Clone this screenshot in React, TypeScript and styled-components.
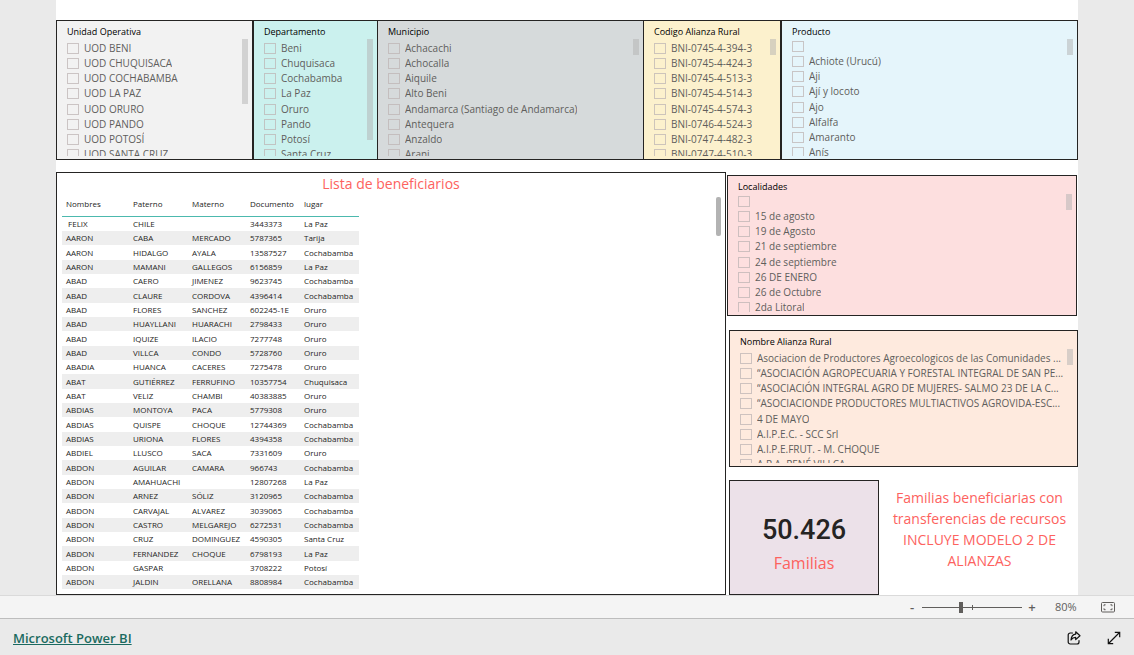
import React from "react";
import styled, { createGlobalStyle, css } from "styled-components";

const GlobalStyle = createGlobalStyle`
  *, *::before, *::after { box-sizing: border-box; }
  body {
    margin: 0;
    background: #eaeaea;
    font-family: "Open Sans", "Noto Sans", sans-serif;
    color: #252423;
  }
`;

const Page = styled.div`
  display: flex;
  flex-direction: column;
  min-height: 100vh;
`;

const Stage = styled.main`
  padding: 0 56px;
  background: #eaeaea;
`;

const Canvas = styled.div`
  background: #fff;
  padding-top: 20px;
`;

const FilterRow = styled.div`
  display: grid;
  grid-template-columns: 197fr 125fr 266fr 137fr 297fr;
  margin-bottom: 12px;
`;

const Body = styled.div`
  display: grid;
  grid-template-columns: 670fr 352fr;
`;

const SideColumn = styled.div`
  display: flex;
  flex-direction: column;
  min-width: 0;
  padding-top: 3px;
`;

const SlicerBox = styled.fieldset<{ $tone: string; $joined?: boolean }>`
  position: relative;
  min-width: 0;
  margin: 0;
  padding: 4px 4px 3px 10px;
  border: 1px solid #252423;
  ${(p) => p.$joined && css`border-left: 0;`}
  background: ${(p) => p.$tone};
`;

const SlicerTitle = styled.div`
  font-size: 9px;
  line-height: 14px;
  color: #000;
`;

const SlicerList = styled.ul<{ $height: number }>`
  list-style: none;
  margin: 0;
  padding: 2px 0 0;
  height: ${(p) => p.$height}px;
  overflow: hidden;
`;

const SlicerItem = styled.li<{ $blank: boolean }>`
  height: ${(p) => (p.$blank ? 13 : 15)}px;
  &:nth-child(4) { height: 16px; }
`;

const SlicerLabel = styled.label<{ $blank: boolean }>`
  display: flex;
  align-items: ${(p) => (p.$blank ? "flex-start" : "center")};
  gap: 5px;
  height: ${(p) => (p.$blank ? 13 : 15)}px;
  font-size: 10px;
  line-height: 15px;
  color: #605e5c;
`;

const LabelText = styled.span`
  min-width: 0;
  overflow: hidden;
  text-overflow: ellipsis;
  white-space: nowrap;
`;

const Tick = styled.input`
  appearance: none;
  flex: none;
  width: 12px;
  height: 11px;
  margin: 0;
  border: 1px solid rgba(190, 180, 180, 0.75);
  background: transparent;
  &:checked { background: #605e5c; }
`;

const Thumb = styled.div<{ $length: number }>`
  position: absolute;
  top: 18px;
  right: 4px;
  width: 6px;
  height: ${(p) => p.$length}px;
  background: rgba(178, 178, 178, 0.5);
`;

const LocalitiesSlot = styled.div`
  margin: 0 1px 14px 1px;
`;

const LowerSlot = styled.div`
  margin: 0 0 13px 3px;
`;

const TablePanel = styled.section`
  position: relative;
  border: 1px solid #252423;
  padding: 2px 5px 5px;
`;

const TableTitle = styled.h1`
  margin: 0;
  font-size: 14px;
  line-height: 18px;
  font-weight: 400;
  text-align: center;
  color: #fd625e;
`;

const Table = styled.table`
  width: 297px;
  table-layout: fixed;
  border-collapse: separate;
  border-spacing: 0;
  font-size: 8px;
  line-height: 14px;
`;

const HeadCell = styled.th`
  height: 24px;
  padding: 0 0 2px 4px;
  border-bottom: 1px solid #4cb9ae;
  font-weight: 400;
  text-align: left;
  vertical-align: middle;
`;

const Row = styled.tr`
  &:nth-child(even) { background: #eeeeee; }
  &:nth-child(3n) td { height: 15px; }
`;

const Cell = styled.td`
  height: 14px;
  padding: 0 0 0 4px;
  white-space: pre;
`;

const TableThumb = styled.div`
  position: absolute;
  top: 24px;
  right: 4px;
  width: 5px;
  height: 39px;
  border-radius: 2px;
  background: #b3b3b3;
`;

const Summary = styled.div`
  display: grid;
  grid-template-columns: 150fr 199fr;
  flex: 1;
  margin-left: 3px;
`;

const Card = styled.section`
  display: flex;
  flex-direction: column;
  align-items: center;
  justify-content: center;
  padding-top: 16px;
  border: 1px solid #252423;
  background: #ece1e9;
`;

const CardValue = styled.strong`
  font-family: Roboto, sans-serif;
  font-size: 27px;
  line-height: 34px;
  font-weight: 500;
  color: #252423;
`;

const CardLabel = styled.span`
  font-size: 16px;
  line-height: 32px;
  font-weight: 400;
  color: #fd625e;
`;

const Note = styled.p`
  margin: 0;
  padding: 7px 8px 0 10px;
  font-size: 14px;
  line-height: 21px;
  font-weight: 400;
  text-align: center;
  color: #fd625e;
`;

const ZoomBar = styled.div`
  display: flex;
  align-items: center;
  justify-content: flex-end;
  height: 24px;
  padding-right: 18px;
  border-top: 1px solid #dadada;
  border-bottom: 1px solid #bdbdbd;
  background: #f4f4f4;
  color: #605e5c;
`;

const StepButton = styled.button`
  width: 20px;
  height: 20px;
  padding: 0;
  border: 0;
  background: transparent;
  font: 600 13px/20px "Open Sans", sans-serif;
  color: #605e5c;
`;

const ZoomRange = styled.input`
  appearance: none;
  width: 100px;
  height: 12px;
  margin: 0;
  background:
    linear-gradient(#605e5c, #605e5c) 50% 50% / 1px 5px no-repeat,
    linear-gradient(#605e5c, #605e5c) 0 50% / 100% 1px no-repeat;
  &::-webkit-slider-thumb {
    appearance: none;
    width: 4px;
    height: 11px;
    background: #605e5c;
  }
`;

const ZoomValue = styled.span`
  width: 58px;
  padding-left: 13px;
  font-size: 11px;
  line-height: 20px;
`;

const IconButton = styled.button`
  display: flex;
  align-items: center;
  justify-content: center;
  width: 16px;
  height: 16px;
  padding: 0;
  border: 0;
  background: transparent;
  color: inherit;
`;

const Footer = styled.footer`
  display: flex;
  align-items: center;
  justify-content: space-between;
  flex: 1;
  min-height: 36px;
  padding: 2px 12px 0 13px;
  background: #eaeaea;
`;

const BrandLink = styled.a`
  font-size: 13px;
  line-height: 20px;
  font-weight: 600;
  color: #1b6a60;
`;

const FooterActions = styled.div`
  display: flex;
  gap: 24px;
  color: #111;
`;

type SlicerProps = {
  title: string;
  items: string[];
  tone: string;
  thumb: number;
  height?: number;
  joined?: boolean;
};

function Slicer({ title, items, tone, thumb, height = 117, joined }: SlicerProps) {
  return (
    <SlicerBox $tone={tone} $joined={joined} aria-label={title}>
      <SlicerTitle>{title}</SlicerTitle>
      <SlicerList $height={height}>
        {items.map((item) => (
          <SlicerItem key={item} $blank={item === ""}>
            <SlicerLabel $blank={item === ""}>
              <Tick type="checkbox" aria-label={item || "En blanco"} />
              <LabelText>{item}</LabelText>
            </SlicerLabel>
          </SlicerItem>
        ))}
      </SlicerList>
      <Thumb $length={thumb} />
    </SlicerBox>
  );
}

const filters: SlicerProps[] = [
  {
    title: "Unidad Operativa", tone: "#f2f2f2", thumb: 65,
    items: ["UOD BENI", "UOD CHUQUISACA", "UOD COCHABAMBA", "UOD LA PAZ", "UOD ORURO", "UOD PANDO", "UOD POTOSÍ", "UOD SANTA CRUZ"],
  },
  {
    title: "Departamento", tone: "#cbf1ee", thumb: 101,
    items: ["Beni", "Chuquisaca", "Cochabamba", "La Paz", "Oruro", "Pando", "Potosí", "Santa Cruz"],
  },
  {
    title: "Municipio", tone: "#d6dadb", thumb: 16, joined: true,
    items: ["Achacachi", "Achocalla", "Aiquile", "Alto Beni", "Andamarca (Santiago de Andamarca)", "Antequera", "Anzaldo", "Arani"],
  },
  {
    title: "Codigo Alianza Rural", tone: "#fcf1cd", thumb: 16, joined: true,
    items: ["BNI-0745-4-394-3", "BNI-0745-4-424-3", "BNI-0745-4-513-3", "BNI-0745-4-514-3", "BNI-0745-4-574-3", "BNI-0746-4-524-3", "BNI-0747-4-482-3", "BNI-0747-4-510-3"],
  },
  {
    title: "Producto", tone: "#e5f5fb", thumb: 16,
    items: ["", "Achiote (Urucú)", "Aji", "Ají y locoto", "Ajo", "Alfalfa", "Amaranto", "Anís"],
  },
];

const localities = ["", "15 de agosto", "19 de Agosto", "21 de septiembre", "24 de septiembre", "26 DE ENERO", "26 de Octubre", "2da Litoral"];

const alliances = [
  "Asociacion de Productores Agroecologicos de las Comunidades ...",
  "“ASOCIACIÓN AGROPECUARIA Y FORESTAL INTEGRAL DE SAN PE...",
  "“ASOCIACIÓN INTEGRAL AGRO DE MUJERES- SALMO 23 DE LA C...",
  "“ASOCIACIONDE PRODUCTORES MULTIACTIVOS AGROVIDA-ESC...",
  "4 DE MAYO",
  "A.I.P.E.C. - SCC Srl",
  "A.I.P.E.FRUT. - M. CHOQUE",
  "A.P.A. RENÉ VILLCA",
];

const columns: [string, number][] = [
  ["Nombres", 67],
  ["Paterno", 59],
  ["Materno", 58],
  ["Documento", 54],
  ["lugar", 59],
];

const people = [
  [" FELIX", "CHILE", "", "3443373", "La Paz"],
  ["AARON", "CABA", "MERCADO", "5787365", "Tarija"],
  ["AARON", "HIDALGO", "AYALA", "13587527", "Cochabamba"],
  ["AARON", "MAMANI", "GALLEGOS", "6156859", "La Paz"],
  ["ABAD", "CAERO", "JIMENEZ", "9623745", "Cochabamba"],
  ["ABAD", "CLAURE", "CORDOVA", "4396414", "Cochabamba"],
  ["ABAD", "FLORES", "SANCHEZ", "602245-1E", "Oruro"],
  ["ABAD", "HUAYLLANI", "HUARACHI", "2798433", "Oruro"],
  ["ABAD", "IQUIZE", "ILACIO", "7277748", "Oruro"],
  ["ABAD", "VILLCA", "CONDO", "5728760", "Oruro"],
  ["ABADIA", "HUANCA", "CACERES", "7275478", "Oruro"],
  ["ABAT", "GUTIÉRREZ", "FERRUFINO", "10357754", "Chuquisaca"],
  ["ABAT", "VELIZ", "CHAMBI", "40383885", "Oruro"],
  ["ABDIAS", "MONTOYA", "PACA", "5779308", "Oruro"],
  ["ABDIAS", "QUISPE", "CHOQUE", "12744369", "Cochabamba"],
  ["ABDIAS", "URIONA", "FLORES", "4394358", "Cochabamba"],
  ["ABDIEL", "LLUSCO", "SACA", "7331609", "Oruro"],
  ["ABDON", "AGUILAR", "CAMARA", "966743", "Cochabamba"],
  ["ABDON", "AMAHUACHI", "", "12807268", "La Paz"],
  ["ABDON", "ARNEZ", "SÓLIZ", "3120965", "Cochabamba"],
  ["ABDON", "CARVAJAL", "ALVAREZ", "3039065", "Cochabamba"],
  ["ABDON", "CASTRO", "MELGAREJO", "6272531", "Cochabamba"],
  ["ABDON", "CRUZ", "DOMINGUEZ", "4590305", "Santa Cruz"],
  ["ABDON", "FERNANDEZ", "CHOQUE", "6798193", "La Paz"],
  ["ABDON", "GASPAR", "", "3708222", "Potosí"],
  ["ABDON", "JALDIN", "ORELLANA", "8808984", "Cochabamba"],
];

const FitIcon = () => (
  <svg width="15" height="11" viewBox="0 0 15 11" fill="none" stroke="currentColor">
    <rect x="0.5" y="0.5" width="13" height="9.5" rx="1" />
    <path d="M3 4.2V2.8h1.6M9.4 2.8H11v1.4M11 6.3v1.4H9.4M4.6 7.7H3V6.3" />
  </svg>
);

const ShareIcon = () => (
  <svg width="16" height="16" viewBox="0 0 16 16" fill="none" stroke="currentColor" strokeWidth="1.2" strokeLinejoin="round">
    <path d="M6.5 3H4.2A2 2 0 0 0 2.2 5v7a2 2 0 0 0 2 2H11a2 2 0 0 0 2-2v-1.5" strokeLinecap="round" />
    <path d="M9.7 1.800l4.300 3.900-4.300 3.900V7.400C7.600 7.400 6.200 8.200 5 10c.3-3.400 1.900-5.600 4.700-5.900z" />
  </svg>
);

const ExpandIcon = () => (
  <svg width="16" height="16" viewBox="0 0 16 16" fill="none" stroke="currentColor" strokeWidth="1.2">
    <path d="M2.5 13.500l11-11M8.800 2.300h4.900v4.900M2.300 8.800v4.900h4.900" />
  </svg>
);

export default function App() {
  return (
    <Page>
      <GlobalStyle />
      <Stage>
        <Canvas>
          <FilterRow>
            {filters.map((filter) => (
              <Slicer key={filter.title} {...filter} />
            ))}
          </FilterRow>
          <Body>
            <TablePanel>
              <TableTitle>Lista de beneficiarios</TableTitle>
              <Table>
                <colgroup>
                  {columns.map(([name, width]) => (
                    <col key={name} width={width} />
                  ))}
                </colgroup>
                <thead>
                  <tr>
                    {columns.map(([name]) => (
                      <HeadCell key={name} scope="col">{name}</HeadCell>
                    ))}
                  </tr>
                </thead>
                <tbody>
                  {people.map((person) => (
                    <Row key={person[3]}>
                      {person.map((value, i) => (
                        <Cell key={i}>{value}</Cell>
                      ))}
                    </Row>
                  ))}
                </tbody>
              </Table>
              <TableThumb />
            </TablePanel>
            <SideColumn>
              <LocalitiesSlot>
                <Slicer title="Localidades" tone="#fddfdf" thumb={16} height={118} items={localities} />
              </LocalitiesSlot>
              <LowerSlot>
                <Slicer title="Nombre Alianza Rural" tone="#feeade" thumb={16} height={114} items={alliances} />
              </LowerSlot>
              <Summary>
                <Card>
                  <CardValue>50.426</CardValue>
                  <CardLabel>Familias</CardLabel>
                </Card>
                <Note>Familias beneficiarias con transferencias de recursos INCLUYE MODELO 2 DE ALIANZAS</Note>
              </Summary>
            </SideColumn>
          </Body>
        </Canvas>
      </Stage>
      <ZoomBar>
        <StepButton type="button" aria-label="Alejar">-</StepButton>
        <ZoomRange type="range" min={0} max={100} defaultValue={39} aria-label="Zoom" />
        <StepButton type="button" aria-label="Acercar">+</StepButton>
        <ZoomValue>80%</ZoomValue>
        <IconButton type="button" aria-label="Ajustar a la página"><FitIcon /></IconButton>
      </ZoomBar>
      <Footer>
        <BrandLink href="#">Microsoft Power BI</BrandLink>
        <FooterActions>
          <IconButton type="button" aria-label="Compartir"><ShareIcon /></IconButton>
          <IconButton type="button" aria-label="Pantalla completa"><ExpandIcon /></IconButton>
        </FooterActions>
      </Footer>
    </Page>
  );
}
